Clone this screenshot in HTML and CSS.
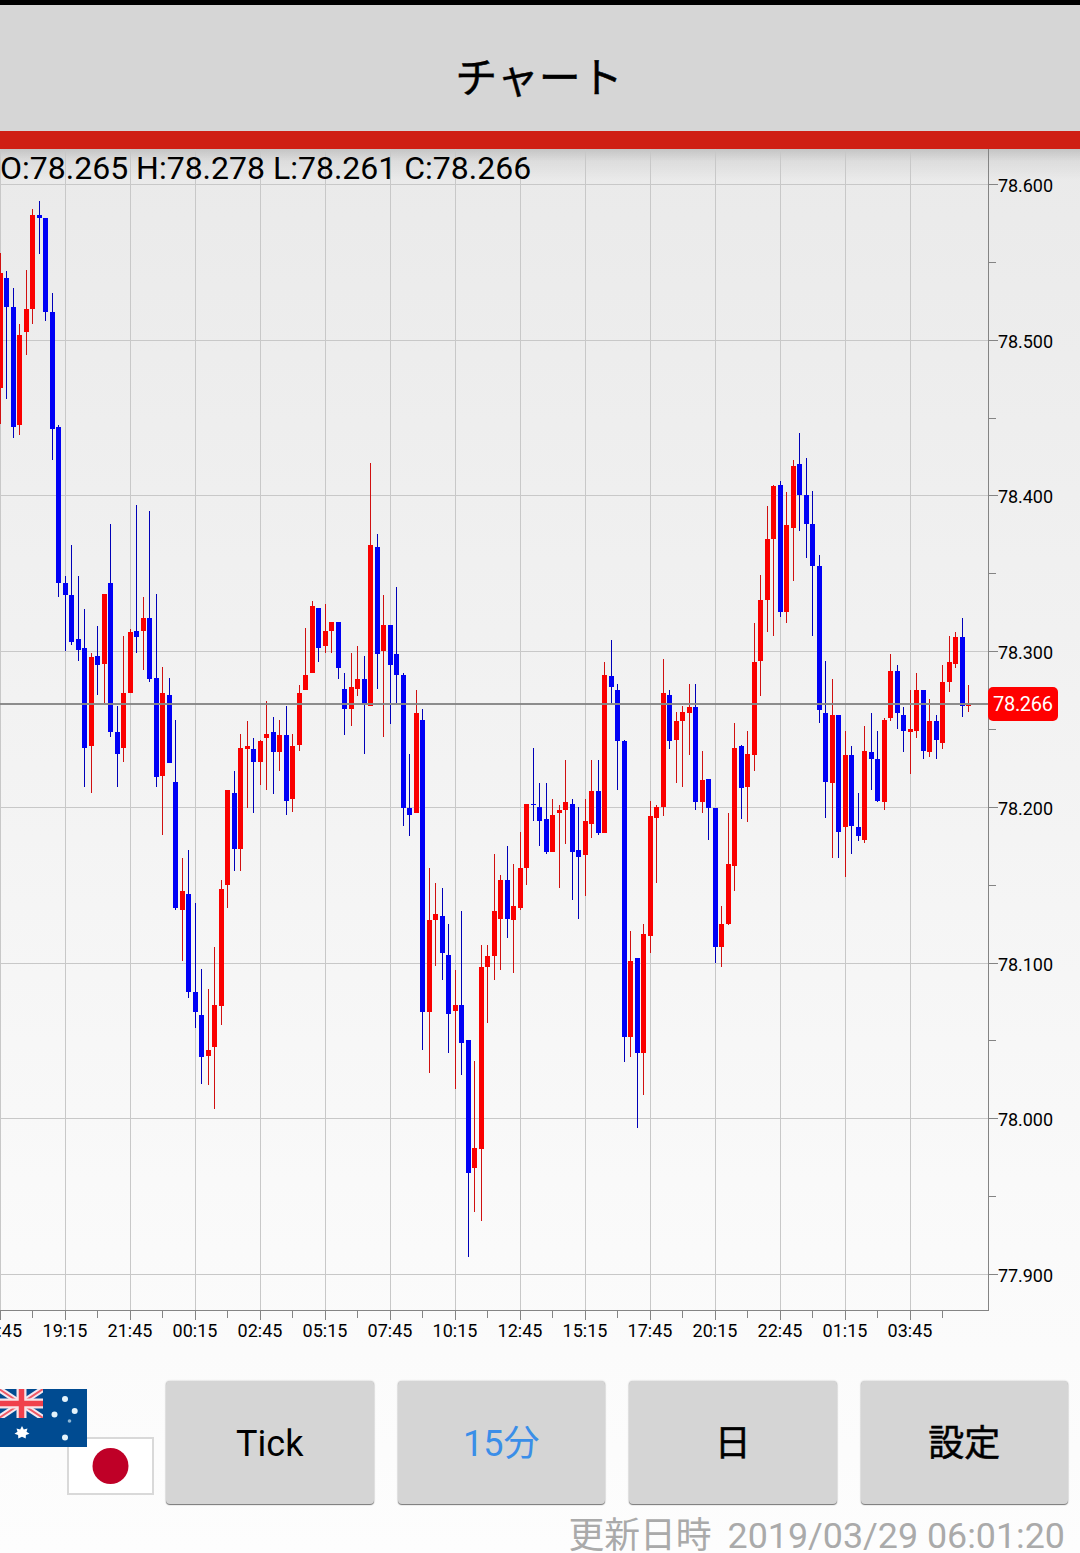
FILE: index.html
```html
<!DOCTYPE html>
<html lang="ja">
<head>
    <meta charset="UTF-8">
    <meta name="viewport" content="width=device-width, initial-scale=1.0">
    <title>チャート</title>
    <link rel="stylesheet" href="styles.css">
</head>
<body>
    <header class="header">
        <h1>チャート</h1>
    </header>

    <main class="chart">
        <svg id="chart" width="1080" height="1201" viewBox="0 149 1080 1201">
            <g id="grid" class="grid"></g>
            <g id="candles"></g>
            <g id="axis" class="axis"></g>
            <g id="labels" class="labels"></g>
            <rect class="price-line" x="0" y="703" width="988" height="2" />
            <rect class="price-tag" x="988" y="687" width="70" height="34" rx="5" />
            <text class="price-text" x="993" y="711" textLength="60">78.266</text>
            <text class="ohlc" x="0" y="179">O:78.265 H:78.278 L:78.261 C:78.266</text>
        </svg>
    </main>

    <div class="toolbar">
        <svg class="flags" width="154" height="108" viewBox="0 0 154 108">
            <rect x="68" y="50" width="85" height="56" fill="#fff" stroke="#d9d9d9" stroke-width="2" />
            <circle cx="110.500" cy="78" r="18" fill="#bf0027" />
            <rect x="0" y="1" width="87" height="58" fill="#004b91" />
            <svg x="0" y="1" width="43" height="29" viewBox="0 0 43 29">
                <path d="M-1 0L43 29M43 0L-1 29" stroke="#f3e9f1" stroke-width="6" />
                <path d="M-1 0L43 29M43 0L-1 29" stroke="#ef5a66" stroke-width="2" />
                <path d="M0 14.500H43M21.500 0V29" stroke="#f8e4e8" stroke-width="10" />
                <path d="M0 14.500H43M21.500 0V29" stroke="#f0404c" stroke-width="5.500" />
            </svg>
            <path d="M22 38l1.800 3.500 3.700-1-1 3.200 3 2-3.600 1.300-.2 3.400-3.700-1.600-3.700 1.600-.2-3.400-3.600-1.300 3-2-1-3.200 3.700 1z" fill="#fff" />
            <g fill="#e4f3fb">
                <circle cx="65" cy="11" r="3" />
                <circle cx="54.500" cy="26.500" r="3" />
                <circle cx="74.700" cy="23" r="3" />
                <circle cx="65" cy="49.500" r="3" />
                <circle cx="69.500" cy="33" r="1.800" fill="#8fb8d6" />
            </g>
        </svg>
        <div class="buttons">
            <button>Tick</button>
            <button class="active">15分</button>
            <button class="kanji">日</button>
            <button class="kanji">設定</button>
        </div>
    </div>

    <footer class="footer">
        <span>更新日時</span>
        <span>2019/03/29 06:01:20</span>
    </footer>

    <script src="chart.js"></script>
</body>
</html>
```
FILE: styles.css
```css
* {
    box-sizing: border-box;
}

body {
    margin: 0;
    height: 1553px;
    overflow: hidden;
    display: flex;
    flex-direction: column;
    font-family: Roboto, "Noto Sans CJK JP", sans-serif;
    color: #000;
    background: linear-gradient(#eaeaea 149px, #fafafa 1250px, #fdfdfd);
}

/* Header */
.header {
    height: 149px;
    flex: none;
    display: flex;
    justify-content: center;
    align-items: center;
    padding: 22px 2px 0 0;
    background-color: #d6d6d6;
    border-top: 5px solid #000;
    border-bottom: 18px solid #cf1f14;
}

.header h1 {
    margin: 0;
    font-size: 42px;
    font-weight: 400;
    line-height: 60px;
    -webkit-text-stroke: 0.4px #000;
}

/* Chart */
.chart {
    height: 1201px;
    flex: none;
    /* shadow under the header */
    background: linear-gradient(rgba(0, 0, 0, 0.16), rgba(0, 0, 0, 0.06) 12px, rgba(0, 0, 0, 0) 32px);
}

.chart svg {
    display: block;
}

.grid {
    fill: #c8c8c8;
}

.axis {
    fill: #848484;
}

.up {
    fill: #fa0000;
}

.down {
    fill: #0000f5;
}

.up-wick {
    fill: #d01010;
}

.down-wick {
    fill: #0000b8;
}

.labels {
    font-size: 18px;
}

.price-line {
    fill: #868686;
    fill-opacity: 0.95;
}

.price-tag {
    fill: #ff0000;
}

.price-text {
    font-size: 20px;
    fill: #fff;
}

.ohlc {
    font-size: 32px;
}

/* Bottom buttons */
.toolbar {
    height: 154px;
    flex: none;
    display: flex;
    align-items: flex-start;
    padding: 31px 12px 0 0;
}

.flags {
    flex: none;
    margin: 7px 12px 0 0;
}

.buttons {
    flex: 1;
    display: grid;
    grid-template-columns: repeat(4, 1fr);
    gap: 24px;
}

.buttons button {
    height: 123px;
    padding: 3px 0 0;
    border: none;
    border-radius: 4px;
    background-color: #d5d5d5;
    box-shadow: 0 1px 1px #777, 0 0 2px rgba(0, 0, 0, 0.25);
    color: #000;
    font: 400 36px/42px Roboto, "Noto Sans CJK JP", sans-serif;
}

.buttons button.kanji {
    -webkit-text-stroke: 0.5px #000;
}

.buttons button.active {
    color: #3a8ee8;
}

.footer {
    display: flex;
    justify-content: flex-end;
    gap: 16px;
    margin-top: 16px;
    padding-right: 15px;
    font-size: 35.8px;
    line-height: 33px;
    color: #aaa;
}
```
FILE: chart.js
```js
// [direction, high, body top, body bottom, low]
const candles = [
    ["u", 253, 273, 388, 424], ["d", 271, 278, 307, 399], ["d", 288, 307, 427, 438], ["u", 324, 335, 425, 435], ["u", 270, 309, 332, 355],
    ["u", 209, 215, 309, 324], ["d", 201, 215, 218, 254], ["d", 218, 218, 312, 321], ["d", 293, 312, 429, 460], ["d", 425, 427, 583, 597],
    ["d", 576, 583, 595, 651], ["d", 545, 595, 642, 645], ["d", 576, 639, 650, 661], ["d", 609, 648, 748, 787], ["u", 653, 657, 746, 793],
    ["d", 626, 656, 665, 695], ["u", 594, 594, 664, 703], ["d", 524, 583, 732, 737], ["d", 706, 732, 754, 787], ["u", 636, 693, 748, 762],
    ["u", 629, 632, 693, 693], ["d", 505, 631, 637, 653], ["u", 597, 618, 631, 670], ["d", 511, 618, 679, 682], ["d", 594, 678, 777, 787],
    ["u", 667, 693, 776, 835], ["d", 678, 695, 763, 763], ["d", 720, 782, 908, 910], ["u", 858, 891, 910, 961], ["d", 850, 894, 992, 998],
    ["d", 903, 992, 1012, 1028], ["d", 969, 1015, 1057, 1084], ["u", 989, 1050, 1056, 1085], ["u", 947, 1005, 1047, 1109], ["u", 880, 889, 1006, 1025],
    ["u", 790, 790, 885, 908], ["d", 771, 793, 849, 871], ["u", 734, 748, 849, 871], ["u", 721, 746, 749, 808], ["d", 738, 749, 762, 813],
    ["u", 740, 741, 762, 785], ["u", 701, 734, 738, 790], ["d", 717, 732, 752, 794], ["u", 720, 735, 752, 771], ["d", 706, 735, 801, 815],
    ["u", 734, 746, 799, 812], ["u", 685, 693, 745, 751], ["u", 628, 675, 690, 690], ["u", 601, 606, 673, 673], ["d", 608, 608, 648, 662],
    ["u", 604, 631, 646, 653], ["u", 622, 622, 631, 653], ["d", 622, 622, 668, 679], ["d", 673, 689, 709, 735], ["u", 653, 687, 709, 726],
    ["u", 646, 679, 689, 696], ["d", 656, 679, 704, 754], ["u", 463, 545, 706, 706], ["d", 534, 547, 654, 689], ["u", 595, 625, 651, 737],
    ["d", 625, 625, 665, 724], ["d", 587, 654, 675, 703], ["d", 673, 675, 808, 826], ["d", 754, 808, 815, 836], ["u", 690, 713, 813, 813],
    ["d", 709, 720, 1012, 1050], ["u", 868, 920, 1012, 1073], ["u", 883, 914, 920, 966], ["d", 888, 916, 953, 980], ["d", 924, 955, 1014, 1053],
    ["u", 970, 1005, 1011, 1089], ["d", 911, 1005, 1043, 1075], ["d", 1040, 1040, 1173, 1257], ["u", 1061, 1148, 1168, 1212], ["u", 945, 967, 1149, 1221],
    ["u", 945, 956, 967, 1023], ["u", 854, 911, 956, 980], ["u", 875, 880, 919, 970], ["d", 846, 880, 919, 938], ["u", 864, 906, 920, 973],
    ["u", 832, 868, 908, 910], ["u", 804, 804, 868, 885], ["d", 748, 804, 805, 821], ["d", 783, 807, 821, 846], ["d", 783, 819, 852, 854],
    ["u", 799, 815, 852, 852], ["u", 805, 810, 813, 888], ["u", 760, 802, 810, 844], ["d", 799, 804, 852, 900], ["d", 807, 850, 857, 919],
    ["u", 799, 821, 855, 896], ["u", 760, 791, 824, 838], ["d", 760, 791, 833, 835], ["u", 662, 675, 833, 833], ["d", 640, 676, 687, 704],
    ["d", 684, 690, 741, 790], ["d", 740, 741, 1037, 1062], ["u", 931, 961, 1037, 1057], ["d", 958, 958, 1053, 1128], ["u", 924, 934, 1053, 1095],
    ["u", 801, 816, 936, 953], ["u", 805, 807, 818, 883], ["u", 659, 693, 807, 816], ["d", 690, 695, 741, 749], ["u", 712, 721, 740, 783],
    ["u", 706, 712, 721, 787], ["u", 684, 707, 713, 755], ["d", 684, 707, 802, 810], ["u", 751, 780, 802, 813], ["d", 779, 779, 808, 840],
    ["d", 808, 808, 947, 963], ["u", 906, 924, 947, 967], ["u", 813, 864, 924, 925], ["u", 723, 748, 866, 891], ["d", 745, 746, 788, 819],
    ["u", 731, 754, 787, 822], ["u", 623, 662, 755, 771], ["u", 575, 600, 661, 696], ["u", 506, 539, 600, 632], ["u", 485, 486, 539, 636],
    ["d", 481, 485, 612, 617], ["u", 492, 525, 612, 623], ["u", 460, 466, 528, 581], ["d", 433, 464, 495, 531], ["d", 458, 495, 524, 558],
    ["d", 491, 524, 566, 636], ["d", 555, 566, 710, 723], ["d", 661, 713, 782, 818], ["u", 679, 715, 783, 858], ["d", 715, 715, 832, 858],
    ["u", 731, 755, 827, 877], ["d", 746, 755, 826, 854], ["d", 793, 827, 836, 841], ["u", 726, 751, 840, 843], ["d", 713, 752, 759, 790],
    ["d", 731, 759, 801, 802], ["u", 718, 720, 802, 810], ["u", 654, 671, 718, 721], ["d", 665, 671, 713, 729], ["d", 707, 715, 731, 752],
    ["u", 690, 729, 732, 774], ["u", 673, 690, 731, 738], ["d", 690, 690, 751, 759], ["u", 699, 721, 752, 757], ["d", 715, 721, 740, 759],
    ["u", 665, 682, 743, 749], ["u", 636, 662, 682, 692], ["u", 632, 637, 664, 668], ["d", 618, 637, 706, 717], ["u", 685, 705, 706, 712]
];

const times = [":45", "19:15", "21:45", "00:15", "02:45", "05:15", "07:45", "10:15", "12:45", "15:15", "17:45", "20:15", "22:45", "01:15", "03:45"];
const prices = [[184, "78.600"], [340, "78.500"], [495, "78.400"], [651, "78.300"], [807, "78.200"], [963, "78.100"], [1118, "78.000"], [1274, "77.900"]];
const minorTicks = [262, 418, 573, 729, 885, 1040, 1196];

function rect(x, y, w, h, cls) {
    return `<rect x="${x}" y="${y}" width="${w}" height="${h}"${cls ? ` class="${cls}"` : ""} />`;
}

let grid = "";
let axis = rect(988, 149, 1, 1162) + rect(0, 1310, 989, 1);
let labels = "";

prices.forEach(([y, text]) => {
    grid += rect(0, y, 988, 1);
    axis += rect(988, y, 10, 1);
    labels += `<text x="998" y="${y + 8}" textLength="55">${text}</text>`;
});
minorTicks.forEach(y => {
    axis += rect(988, y, 8, 1);
});

times.forEach((text, i) => {
    const x = i * 65;
    grid += rect(x, 149, 1, 1161);
    axis += rect(x, 1310, 1, 10) + rect(x + 32, 1310, 1, 8);
    if (i === 0) {
        labels += `<text x="22" y="1337" text-anchor="end">${text}</text>`;
    } else {
        labels += `<text x="${x}" y="1337" text-anchor="middle">${text}</text>`;
    }
});

let bars = "";
candles.forEach(([dir, high, top, bottom, low], i) => {
    const x = Math.floor(i * 6.5);
    const cls = dir === "u" ? "up" : "down";
    bars += rect(x, high, 1, low - high, cls + "-wick");
    bars += rect(x - 2, top, 5, bottom - top, cls);
});

document.getElementById("grid").innerHTML = grid;
document.getElementById("axis").innerHTML = axis;
document.getElementById("labels").innerHTML = labels;
document.getElementById("candles").innerHTML = bars;
```
